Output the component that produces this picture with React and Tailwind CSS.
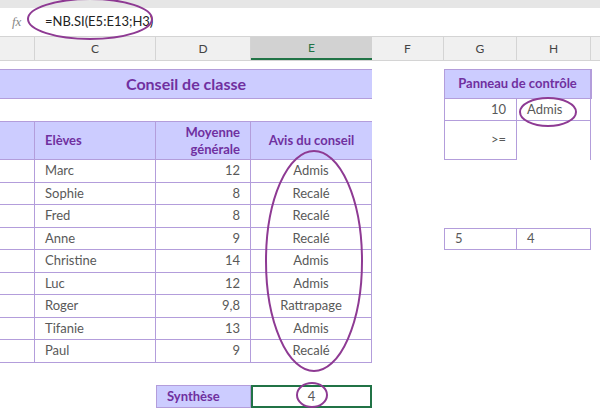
const cols = "grid grid-cols-[35px_121px_95px_121px_72px_73px_74px_1fr]";
const B = "border-[#b39ddb]";
const rows = [["Marc","12","Admis"],["Sophie","8","Recalé"],["Fred","8","Recalé"],["Anne","9","Recalé"],["Christine","14","Admis"],["Luc","12","Admis"],["Roger","9,8","Rattrapage"],["Tifanie","13","Admis"],["Paul","9","Recalé"]];

export default function App() {
  return (
    <div className="relative w-[600px] h-[411px] bg-white overflow-hidden text-[13px] text-[#595959]" style={{fontFamily:"Lato, 'Open Sans', sans-serif"}}>
      <div className="h-[8px] bg-[#e6e6e6]" />
      <div className="h-[29px] flex items-center border-b border-[#d4d4d4]">
        <div className="w-[32px] pl-[12px] italic text-[#888]" style={{fontFamily:"'Liberation Serif', serif"}}>fx</div>
        <div className="pl-[13px] text-[#222] text-[13px]">=NB.SI(E5:E13;H3)</div>
      </div>
      <div className={`${cols} h-[24px] bg-[#f0f0f0] text-[#444] text-[12px] border-b border-[#d4d4d4]`}>
        <div className="border-r border-[#d4d4d4]" />
        {["C","D"].map(c=><div key={c} className="border-r border-[#d4d4d4] flex items-center justify-center">{c}</div>)}
        <div className="bg-[#d2d2d2] border-b-2 border-[#217346] flex items-center justify-center text-[#217346]">E</div>
        {["F","G","H"].map(c=><div key={c} className="border-r border-[#d4d4d4] flex items-center justify-center">{c}</div>)}
        <div />
      </div>
      <div className="h-[8px]" />
      <div className={`${cols} h-[30px]`}>
        <div className={`col-span-4 bg-[#ccccff] border-y ${B} flex items-center justify-center text-[16px] font-bold text-[#7030a0]`}>Conseil de classe</div>
        <div />
        <div className={`col-span-2 bg-[#ccccff] border ${B} flex items-center justify-center text-[13px] font-bold text-[#7030a0]`}>Panneau de contrôle</div>
        <div className={`border-l ${B}`} />
      </div>
      <div className={`${cols} h-[22px]`}>
        <div className="col-span-5" />
        <div className={`border-l border-r border-b ${B} flex items-center justify-end pr-[10px]`}>10</div>
        <div className={`border-r border-b ${B} flex items-center pl-[10px]`}>Admis</div>
      </div>
      <div className={`${cols} h-[39px]`}>
        <div className={`col-span-4 bg-[#ccccff] border-y ${B} grid grid-cols-[35px_121px_95px_121px] font-bold text-[#7030a0]`}>
          <div className={`border-r ${B}`} />
          <div className={`border-r ${B} flex items-center pl-[10px]`}>Elèves</div>
          <div className={`border-r ${B} flex flex-col justify-center items-end pr-[10px] leading-[17px]`}><span>Moyenne</span><span>générale</span></div>
          <div className="flex items-center justify-center">Avis du conseil</div>
        </div>
        <div />
        <div className={`border-l border-r border-b ${B} flex items-center justify-end pr-[10px]`}>&gt;=</div>
        <div className={`border-r ${B}`} />
      </div>
      {rows.map((r,i)=>(
        <div key={i} className={`${cols} h-[22.5px]`}>
          <div className={`border-r border-b ${B}`} />
          <div className={`border-r border-b ${B} flex items-center pl-[10px]`}>{r[0]}</div>
          <div className={`border-r border-b ${B} flex items-center justify-end pr-[10px]`}>{r[1]}</div>
          <div className={`border-r border-b ${B} flex items-center justify-center`}>{r[2]}</div>
          <div />
          {i===3 ? <>
            <div className={`border-l border-y border-r ${B} flex items-center pl-[10px]`}>5</div>
            <div className={`border-y border-r ${B} flex items-center pl-[10px]`}>4</div>
          </> : <><div/><div/></>}
        </div>
      ))}
      <div className="h-[22px]" />
      <div className={`${cols} h-[23px]`}>
        <div className="col-span-2" />
        <div className={`bg-[#ccccff] border ${B} flex items-center pl-[10px] font-bold text-[#7030a0]`}>Synthèse</div>
        <div className="border-2 border-[#217346] flex items-center justify-center">4</div>
      </div>
      <svg className="absolute inset-0 pointer-events-none" width="600" height="411">
        <g fill="none" stroke="#8e3a93" strokeWidth="2">
          <ellipse cx="90" cy="19" rx="62" ry="20" />
          <ellipse cx="548" cy="112" rx="28" ry="14" />
          <ellipse cx="314" cy="261" rx="48" ry="110" />
          <ellipse cx="312" cy="395" rx="15" ry="12" />
        </g>
      </svg>
    </div>
  );
}
